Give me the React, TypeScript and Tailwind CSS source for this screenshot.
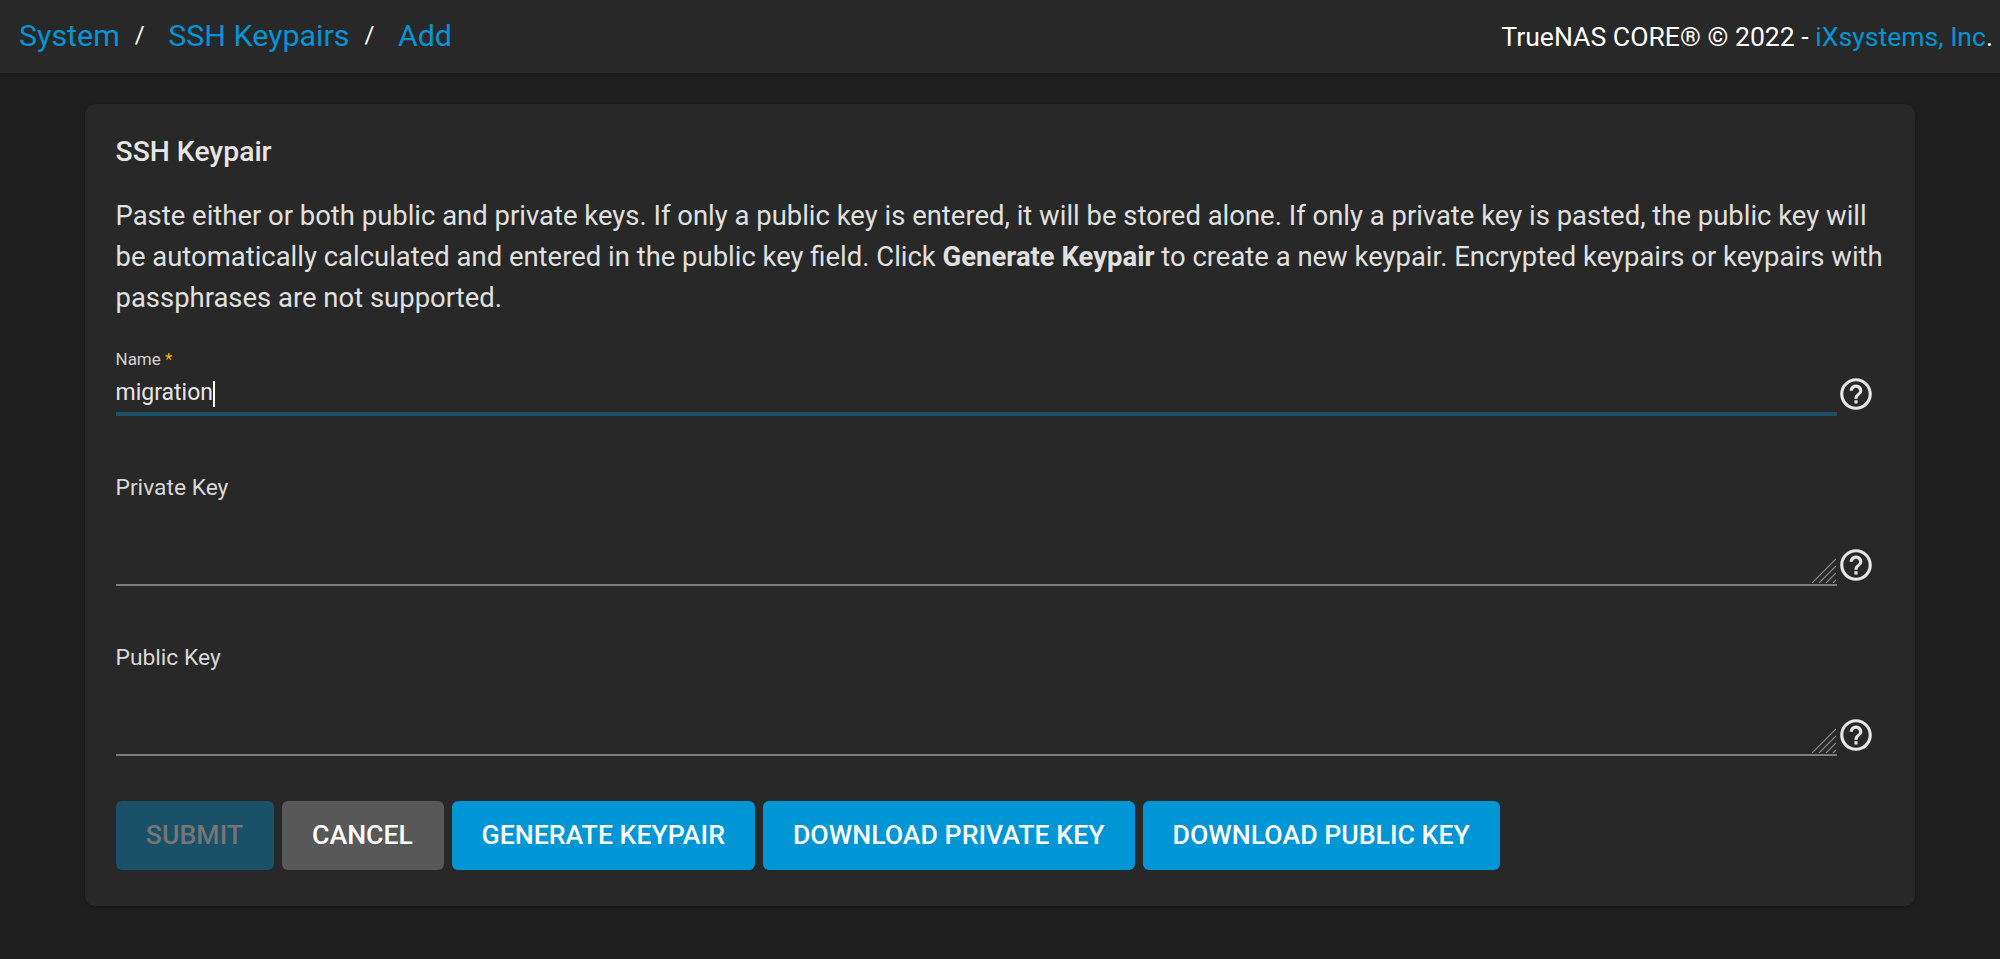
import React from 'react';

const HelpIcon = () => (
  <svg viewBox="0 0 24 24" className="w-[38px] h-[38px] shrink-0" fill="#e6e6e6">
    <path d="M11 18h2v-2h-2v2zm1-16C6.48 2 2 6.48 2 12s4.48 10 10 10 10-4.48 10-10S17.52 2 12 2zm0 18c-4.41 0-8-3.59-8-8s3.59-8 8-8 8 3.59 8 8-3.59 8-8 8zm0-14c-2.21 0-4 1.79-4 4h2c0-1.1.9-2 2-2s2 .9 2 2c0 2-3 1.75-3 5h2c0-2.25 3-2.5 3-5 0-2.21-1.79-4-4-4z" />
  </svg>
);

const ResizeGrip = () => (
  <svg viewBox="0 0 24 25" className="absolute right-[1px] bottom-[3px] w-[24px] h-[25px]" stroke="#8a8a8a" strokeWidth="1.2" fill="none">
    <path d="M0 25L24 1" />
    <path d="M7 25L24 8" />
    <path d="M14 25L24 15" />
    <path d="M21 25L24 22" />
  </svg>
);

const KeyField = ({ label }: { label: string }) => (
  <div className="flex items-end h-[170px]">
    <div className="flex-1 min-w-0 relative h-full flex flex-col">
      <div className="pt-[58px] text-[22.8px] leading-[28px] text-[#d8d8d8]">{label}</div>
      <textarea className="flex-1 resize-none bg-transparent outline-none border-b-[2px] border-[#7d7d7d]" />
      <ResizeGrip />
    </div>
    <div className="w-[47px] mb-[2px]">
      <HelpIcon />
    </div>
  </div>
);

const ActionButton = ({ label }: { label: string }) => (
  <button className="h-[69px] px-[30px] rounded-[6px] bg-[#0095d5] text-white text-[26.7px] font-medium">
    {label}
  </button>
);

export default function App() {
  return (
    <div className="min-h-[959px] bg-[#1e1e1e] font-['Roboto',sans-serif]">
      <header className="h-[73px] bg-[#282828] shadow-[0_1px_3px_rgba(0,0,0,0.3)] flex items-center justify-between pl-[19px] pr-[7px]">
        <nav className="flex items-center pb-[2px] text-[30.4px] text-[#0095d5]">
          <span>System</span>
          <span className="text-white ml-[15px] mr-[23.5px] text-[24px]">/</span>
          <span>SSH Keypairs</span>
          <span className="text-white ml-[15px] mr-[23.5px] text-[24px]">/</span>
          <span>Add</span>
        </nav>
        <div className="text-[26.6px] text-white">
          TrueNAS CORE® © 2022 - <span className="text-[#0095d5]">iXsystems, Inc</span>.
        </div>
      </header>

      <main className="px-[85px] pt-[31px]">
        <section className="h-[802px] rounded-[10px] bg-[#282828] shadow-[0_1px_3px_rgba(0,0,0,0.3)] pl-[30.5px] pr-[31.5px] pt-[33px]">
          <h2 className="text-[28.3px] leading-[30px] font-medium text-[#e6e6e6]">SSH Keypair</h2>
          <p className="mt-[29px] text-[27.45px] leading-[41px] text-[#e0e0e0] max-w-[1790px]">
            Paste either or both public and private keys. If only a public key is entered, it will be stored alone. If only a private key is pasted, the public key will be automatically calculated and entered in the public key field. Click <b className="font-bold">Generate Keypair</b> to create a new keypair. Encrypted keypairs or keypairs with passphrases are not supported.
          </p>

          <div className="mt-[30px] flex items-start">
            <div className="flex-1 min-w-0">
              <div className="text-[17px] leading-[20px] text-[#d0d0d0]">
                Name <span className="text-[#f0b400]">*</span>
              </div>
              <div className="h-[41px] box-content flex items-center mt-[2px] text-[23px] text-[#e6e6e6] border-b-[4px] border-[#1a5068]">
                <span className="mt-[4px]">migration</span>
                <span className="w-[2px] h-[26px] mt-[4px] bg-white" />
              </div>
            </div>
            <div className="w-[47px] mt-[26px]">
              <HelpIcon />
            </div>
          </div>

          <KeyField label="Private Key" />
          <KeyField label="Public Key" />

          <div className="mt-[45px] flex gap-[8px]">
            <button disabled className="h-[69px] w-[158px] rounded-[6px] bg-[#1a5068] text-[#757575] text-[26.7px] font-medium">SUBMIT</button>
            <button className="h-[69px] w-[162px] rounded-[6px] bg-[#585858] text-white text-[26.7px] font-medium">CANCEL</button>
            <ActionButton label="GENERATE KEYPAIR" />
            <ActionButton label="DOWNLOAD PRIVATE KEY" />
            <ActionButton label="DOWNLOAD PUBLIC KEY" />
          </div>
        </section>
      </main>
    </div>
  );
}
